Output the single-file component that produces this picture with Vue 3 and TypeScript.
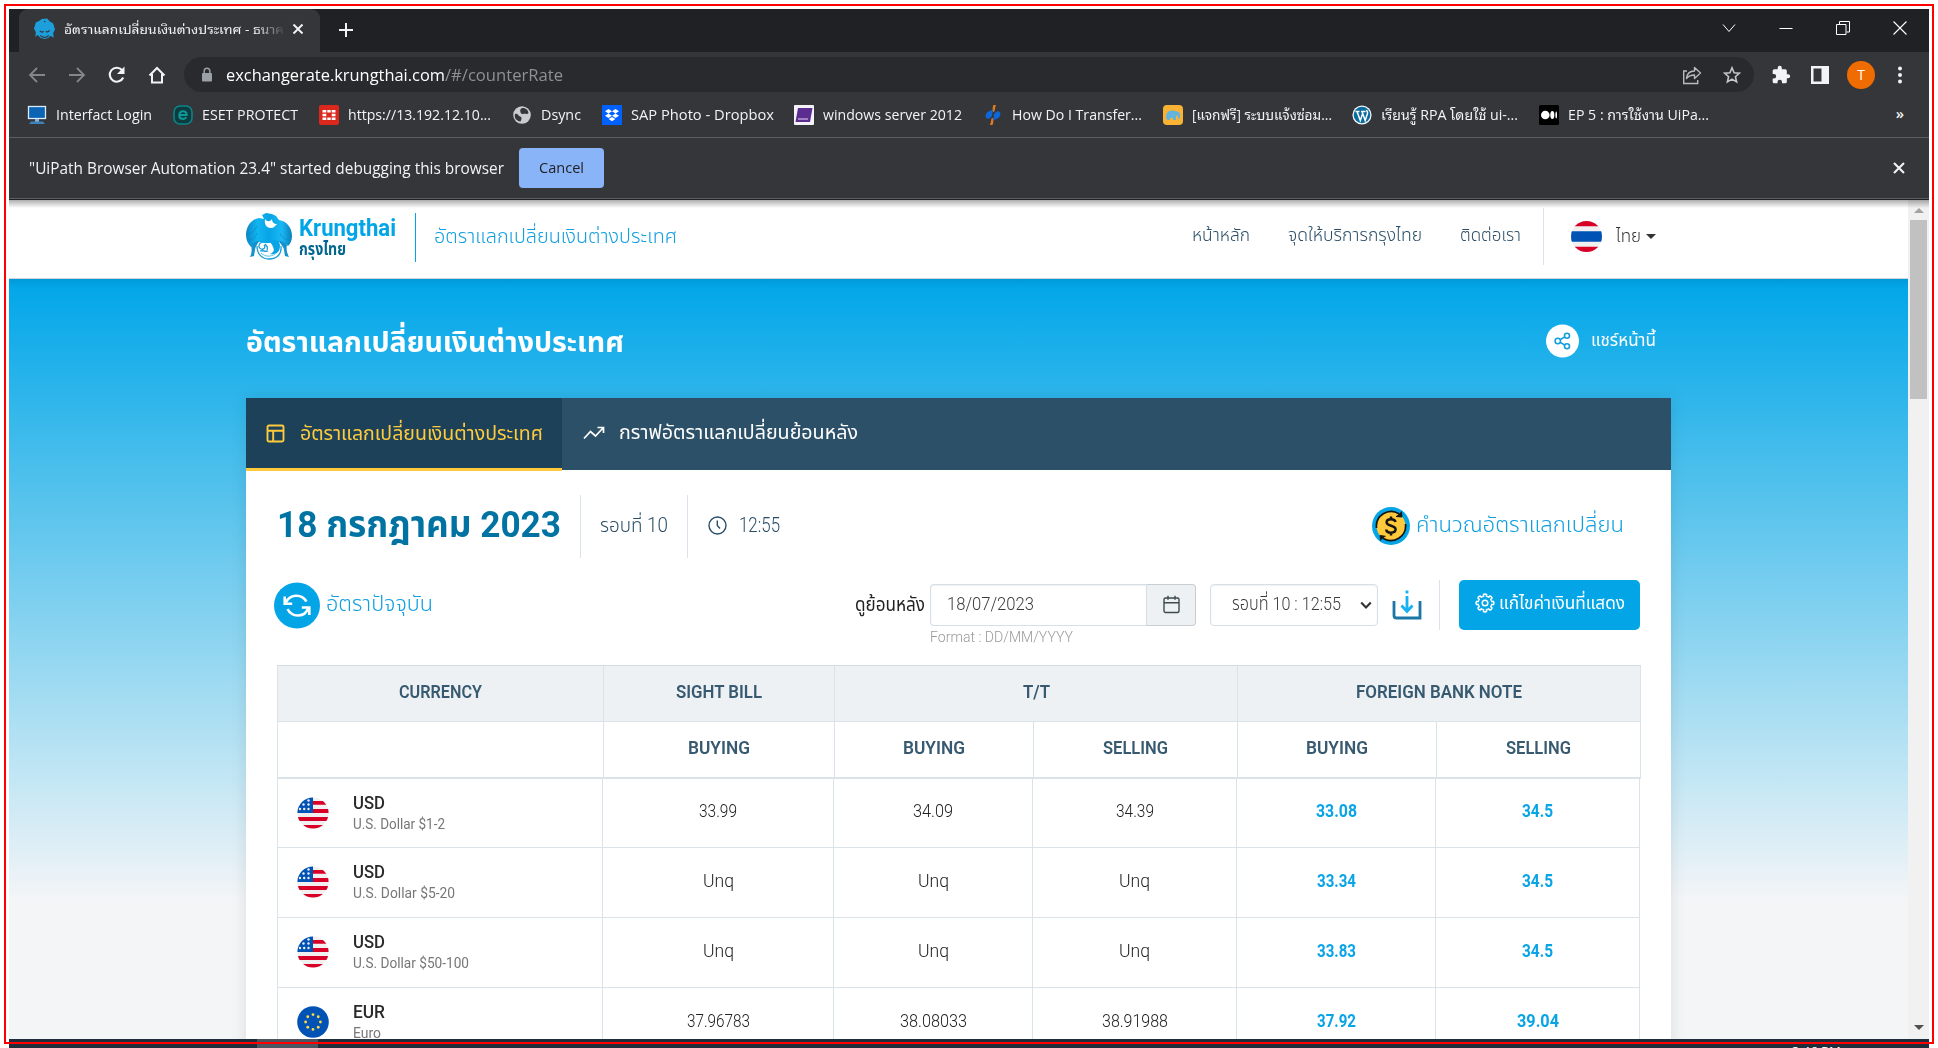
<script setup lang="ts">
interface Bookmark { icon: string; label: string; w: number; gap: number }
interface Cell { v: string; w: number }
interface Row { code: string; cw: number; name: string; nw: number; flag: 'us' | 'eu'; cells: Cell[] }

// Condenses (or widens) a label horizontally so that it takes exactly the given width.
const vFit = {
  mounted(el: HTMLElement, binding: { value: number }) {
    const natural = el.getBoundingClientRect().width
    if (!natural) return
    el.style.transform = `scaleX(${binding.value / natural})`
    el.style.marginRight = `${binding.value - natural}px`
  },
}

const bookmarks: Bookmark[] = [
  { icon: 'pc', label: 'Interfact Login', w: 96, gap: 21 },
  { icon: 'eset', label: 'ESET PROTECT', w: 96, gap: 21 },
  { icon: 'forti', label: 'https://13.192.12.10...', w: 143, gap: 21 },
  { icon: 'globe', label: 'Dsync', w: 40, gap: 21 },
  { icon: 'dropbox', label: 'SAP Photo - Dropbox', w: 143, gap: 20 },
  { icon: 'purple', label: 'windows server 2012', w: 139, gap: 21 },
  { icon: 'knot', label: 'How Do I Transfer...', w: 130, gap: 21 },
  { icon: 'elephant', label: '[แจกฟรี] ระบบแจ้งซ่อม...', w: 140, gap: 20 },
  { icon: 'wp', label: 'เรียนรู้ RPA โดยใช้ ui-...', w: 137, gap: 21 },
  { icon: 'medium', label: 'EP 5 : การใช้งาน UiPa...', w: 141, gap: 0 },
]

const unq: Cell = { v: 'Unq', w: 31 }
const rows: Row[] = [
  { code: 'USD', cw: 32, name: 'U.S. Dollar $1-2', nw: 92, flag: 'us', cells: [{ v: '33.99', w: 38 }, { v: '34.09', w: 40 }, { v: '34.39', w: 38 }, { v: '33.08', w: 41 }, { v: '34.5', w: 31 }] },
  { code: 'USD', cw: 32, name: 'U.S. Dollar $5-20', nw: 102, flag: 'us', cells: [unq, unq, unq, { v: '33.34', w: 39 }, { v: '34.5', w: 31 }] },
  { code: 'USD', cw: 32, name: 'U.S. Dollar $50-100', nw: 116, flag: 'us', cells: [unq, unq, unq, { v: '33.83', w: 39 }, { v: '34.5', w: 31 }] },
  { code: 'EUR', cw: 32, name: 'Euro', nw: 28, flag: 'eu', cells: [{ v: '37.96783', w: 63 }, { v: '38.08033', w: 67 }, { v: '38.91988', w: 66 }, { v: '37.92', w: 39 }, { v: '39.04', w: 42 }] },
]

const euStars = Array.from({ length: 8 }, (_, i) => {
  const a = (i * Math.PI) / 4
  return { x: 16 + 7.4 * Math.sin(a), y: 16 - 7.4 * Math.cos(a) }
})
const usStars = [[11.5, 3.5], [6.5, 7.5], [11.5, 7.5], [3, 12], [7.2, 12], [11.5, 12]]
const gearTeeth = [0, 45, 90, 135, 180, 225, 270, 315]
</script>

<template>
  <div class="shot">
    <div class="window">
      <div class="tabstrip">
        <div class="tab">
          <svg class="favicon" viewBox="0 0 46 46"><path d="M17 2 29 1l5 6 8 5 4 13-4 8 1 10-7-4-5 5-8 2-9-3-6-6-5 4 1-10-4-8 4-13 8-4z" fill="#1d9fdb" /><path d="M13 28c3 4 6 3 8 1m5 0c3 3 6 1 8-2M14 38c6 6 13 6 18 0M22 8h3" fill="none" stroke="#35363a" stroke-width="2.6" /></svg>
          <span class="tab-title"><span v-fit="220" class="t">อัตราแลกเปลี่ยนเงินต่างประเทศ - ธนาค</span></span>
          <svg class="tab-close" viewBox="0 0 12 12"><path d="M1.5 1.5 10.500 10.500M10.500 1.500 1.500 10.500" stroke="#f1f3f4" stroke-width="1.900" /></svg>
        </div>
        <svg class="plus" width="16" height="16" viewBox="0 0 16 16"><path d="M8 1v14M1 8h14" stroke="#f1f3f4" stroke-width="2" /></svg>
        <div class="winctl">
          <svg width="14" height="14" viewBox="0 0 14 14"><path d="M1 3.500 7 10.500 13 3.500" fill="none" stroke="#fff" stroke-width="1" /></svg>
          <svg width="14" height="14" viewBox="0 0 14 14"><path d="M.5 7.500h13" stroke="#fff" /></svg>
          <svg width="14" height="14" viewBox="0 0 14 14"><path d="M.5 3.500h9.500v10H.5zM3.500 3V.5h10v10.500H10.500" fill="none" stroke="#fff" /></svg>
          <svg width="14" height="14" viewBox="0 0 14 14"><path d="M.5.5l13 13M13.500.5l-13 13" stroke="#fff" stroke-width="1.100" /></svg>
        </div>
      </div>

      <div class="toolbar">
        <div class="navicons">
          <svg viewBox="0 0 20 20"><path d="M18 10H3M10 3 3 10l7 7" fill="none" stroke="#84868a" stroke-width="1.800" /></svg>
          <svg viewBox="0 0 20 20"><path d="M2 10h15M10 3l7 7-7 7" fill="none" stroke="#84868a" stroke-width="1.800" /></svg>
          <svg viewBox="0 0 20 20"><path d="M16.200 12.500A7 7 0 1 1 15 5" fill="none" stroke="#f1f3f4" stroke-width="2.100" /><path d="M17.500 1.500V9H10z" fill="#f1f3f4" /></svg>
          <svg viewBox="0 0 20 20"><path d="M2.500 10.500 10 3l7.500 7.500M5 9v8.500h10V9" fill="none" stroke="#f1f3f4" stroke-width="2" /></svg>
        </div>
        <div class="omnibox">
          <svg class="lock" width="12" height="16" viewBox="0 0 12 16"><rect x="1" y="6" width="10" height="8.500" rx="1" fill="#9aa0a6" /><path d="M3.200 6V4a2.800 2.800 0 0 1 5.600 0v2" fill="none" stroke="#9aa0a6" stroke-width="1.500" /></svg>
          <span v-fit="219" class="t url">exchangerate.krungthai.com</span><span v-fit="118" class="t url dim">/#/counterRate</span>
          <div class="omni-right">
            <svg width="20" height="20" viewBox="0 0 20 20"><path d="M5 6H1.700v12.500h14V15" fill="none" stroke="#b8babd" stroke-width="1.400" /><path d="M4.500 13.500c.5-5 3.500-7.500 8-7.500V2.500L18.500 8l-6 5.500V10c-3.500 0-6 1-8 3.500z" fill="none" stroke="#b8babd" stroke-width="1.400" stroke-linejoin="round" /></svg>
            <svg width="18" height="18" viewBox="0 0 18 18"><path d="m9 1.800 2.100 4.900 5.300.5-4 3.500 1.200 5.200L9 13.100l-4.600 2.800 1.200-5.200-4-3.500 5.300-.5z" fill="none" stroke="#c4c6c8" stroke-width="1.600" /></svg>
          </div>
        </div>
        <div class="ext">
          <svg width="20" height="20" viewBox="0 0 24 24"><path d="M20.500 11H19V7a2 2 0 0 0-2-2h-4V3.500a2.500 2.500 0 0 0-5 0V5H4a2 2 0 0 0-2 2v3.800h1.500a2.700 2.700 0 0 1 0 5.400H2V20a2 2 0 0 0 2 2h3.800v-1.500a2.700 2.700 0 0 1 5.400 0V22H17a2 2 0 0 0 2-2v-4h1.500a2.500 2.500 0 0 0 0-5z" fill="#f1f3f4" /></svg>
          <svg width="18" height="18" viewBox="0 0 18 18"><path d="M0 0h18v18H0zM2.500 2.500v13h8v-13z" fill="#f1f3f4" fill-rule="evenodd" /></svg>
          <span class="avatar">T</span>
          <svg width="4" height="18" viewBox="0 0 4 18"><circle cx="2" cy="2.500" r="2" fill="#f1f3f4" /><circle cx="2" cy="9" r="2" fill="#f1f3f4" /><circle cx="2" cy="15.500" r="2" fill="#f1f3f4" /></svg>
        </div>
      </div>

      <div class="bookmarks">
        <div v-for="b in bookmarks" :key="b.label" class="bm" :style="{ marginRight: b.gap + 'px' }">
          <svg width="20" height="20" viewBox="0 0 20 20">
            <template v-if="b.icon === 'pc'"><rect x="1.500" y="1.500" width="17" height="12" fill="#0b64b4" stroke="#d8ecfa" stroke-width="1.300" /><path d="M8 14h4v3H8z" fill="#8bb3cf" /><path d="M4 16.500h12l2 2.500H2z" fill="#3d83bb" /></template>
            <template v-else-if="b.icon === 'eset'"><rect x="1" y="1" width="18" height="18" rx="6" fill="#0d3b40" stroke="#0b8587" stroke-width="1.600" /><path d="M6.300 10h7.400c0-5-7-5-7.400 0s5.800 4.500 7 2.300" fill="none" stroke="#0b9a98" stroke-width="2" /></template>
            <template v-else-if="b.icon === 'forti'"><rect width="20" height="20" rx="2" fill="#da291c" /><path d="M3.500 5h3.800v2.500H3.500zM8.300 5h3.400v2.500H8.300zM12.700 5h3.800v2.500h-3.800zM3.500 8.800h3.800v2.500H3.500zM12.700 8.800h3.800v2.500h-3.800zM3.500 12.600h3.800V15H3.500zM8.300 12.600h3.400V15H8.300zM12.700 12.600h3.800V15h-3.800z" fill="#fff" /></template>
            <template v-else-if="b.icon === 'globe'"><circle cx="10" cy="10" r="8.800" fill="#c9cccf" /><path d="M3 9c3-1 3 2 5 2.500s2 2 .5 5C4 16 2 12.500 3 9zM9 3.500c2-1.500 7 0 7.500 4.500-1.500 2-4 0-5.500 1S7 6 9 3.500z" fill="#35363a" /></template>
            <template v-else-if="b.icon === 'dropbox'"><rect width="20" height="20" fill="#0061fe" /><path d="m6.500 4 3.500 2.200-3.500 2.200L3 6.200zM13.500 4 17 6.200l-3.500 2.200L10 6.200zM6.500 8.500l3.500 2.200-3.500 2.200L3 10.700zM13.500 8.500l3.500 2.200-3.500 2.200-3.500-2.200zM10 12l3.400 2.100L10 16.300l-3.400-2.200z" fill="#fff" /></template>
            <template v-else-if="b.icon === 'purple'"><rect width="20" height="20" rx="1" fill="#f4f2f6" /><path d="M4 3h14.500L16 17H1.500z" fill="#5c2d91" /><path d="M4 14h10" stroke="#b9a0d4" stroke-width="1.500" /></template>
            <template v-else-if="b.icon === 'knot'"><path d="M12.500 0c-3 1.500-.5 4-2.500 6.500M7.500 20c3-1.500.5-4 2.500-6.500" fill="none" stroke="#e07b1f" stroke-width="2.400" /><path d="M10.500 4.500C4.500 6 1.500 9 3 12.500c1.500 2.500 5 1 6-2 .5-2 0-4 1.500-6zM9.500 15.500c6-1.500 9-4.500 7.500-8-1.500-2.500-5-1-6 2-.5 2 0 4-1.500 6z" fill="#0d67d8" /></template>
            <template v-else-if="b.icon === 'elephant'"><rect width="20" height="20" rx="4" fill="#f9b233" /><path d="M3 13c0-5 2-7.500 6-7.500 3 0 4 1 5 1 3 0 3.500 3 3 7h-2v-3l-2 .5V15h-3v-2H7v2H4.500z" fill="#64b5dc" /></template>
            <template v-else-if="b.icon === 'wp'"><circle cx="10" cy="10" r="9.600" fill="#f5f8fa" /><circle cx="10" cy="10" r="8.300" fill="#0a6c9e" /><path d="M3.500 6.500h4M9 6.500h4.500M5 6.500l3.300 9L10.500 9M10 6.500l3.200 9 2.300-7c.4-1.500-.8-2.500-1-3.500" fill="none" stroke="#fff" stroke-width="1.500" /></template>
            <template v-else><rect width="20" height="20" rx="1.500" fill="#000" /><circle cx="6.300" cy="10" r="4.300" fill="#fff" /><ellipse cx="13.300" cy="10" rx="2" ry="4" fill="#fff" /><ellipse cx="17.200" cy="10" rx=".8" ry="3.600" fill="#fff" /></template>
          </svg>
          <span v-fit="b.w" class="t">{{ b.label }}</span>
        </div>
        <span class="more">»</span>
      </div>

      <div class="infobar">
        <span v-fit="475" class="t">"UiPath Browser Automation 23.4" started debugging this browser</span>
        <button class="cancel"><span v-fit="45" class="t">Cancel</span></button>
        <svg class="info-close" width="12" height="12" viewBox="0 0 12 12"><path d="M1 1 11 11M11 1 1 11" stroke="#f1f3f4" stroke-width="2.100" /></svg>
      </div>

      <div class="viewport">
        <div class="page">
          <header class="site-head">
            <svg class="bird" width="46" height="48" viewBox="0 0 46 48">
              <defs><linearGradient id="bird" x1="0" y1="0" x2="1" y2="0"><stop offset="0" stop-color="#0b86c4" /><stop offset=".25" stop-color="#12b5f2" /><stop offset=".5" stop-color="#08a4e6" /><stop offset=".78" stop-color="#19b8f4" /><stop offset="1" stop-color="#0a7fbb" /></linearGradient></defs>
              <path d="M16 2l4-2 6 1 4 2 3 4c8 1 13 8 13 16 0 4-1.500 8-4 10-2-2-6-4-10-4l-4 1H17l-4-1c-3 1-6 3-8 5-3-3-5-7-5-12C0 13 6 6 13 5l5 1z" fill="url(#bird)" />
              <path d="M19 6c-1 6 2 9 6 9 3 0 4-2 6-4-3 0-5-2-5-5-2 3-5 3-7 0z" fill="#fff" />
              <path d="M5 32c2-2 5-4 8-4-2 4-4 6-4 9l-1 6-4 1c2-4 2-8 1-12zM41 32c-2-2-5-4-8-4 2 4 5 6 5 9l1 6 4 1c-2-4-3-8-2-12z" fill="#1592cc" />
              <path d="M24 27c5 0 10-1 10 6 0 6-4 9-10 8 5-2 4-5 3-7-1-3-3-4-3-7z" fill="#08a4e6" />
              <path d="M11 33c0 7 4 13 12 13s13-5 12-13M16 29c-4 2-4 6-1 7s5-2 3-4M19 31c2 2 3 3 2 6M14 38c3-1 5 1 8 0" fill="none" stroke="#1a9ed6" stroke-width="1.300" />
              <path d="M15 40c4 4 10 4 14 1" fill="none" stroke="#5cc3ea" stroke-width="1" />
              <path d="M2 27c4 0 8-3 9-7M44 27c-5 0-9-3-10-7M1 21c5 0 8-4 10-8" fill="none" stroke="#0785c2" stroke-width=".8" opacity=".7" />
            </svg>
            <div class="brand">
              <span class="brand-en"><span v-fit="97" class="t">Krungthai</span></span>
              <span class="brand-th"><span v-fit="47" class="t">กรุงไทย</span></span>
            </div>
            <span class="brand-line"></span>
            <span v-fit="243" class="t head-title">อัตราแลกเปลี่ยนเงินต่างประเทศ</span>
            <nav class="menu">
              <span v-fit="58" class="t">หน้าหลัก</span>
              <span class="m2"><span v-fit="134" class="t">จุดให้บริการกรุงไทย</span></span>
              <span v-fit="61" class="t">ติดต่อเรา</span>
            </nav>
            <span class="lang-line"></span>
            <svg width="31" height="31" viewBox="0 0 32 32"><clipPath id="thc"><circle cx="16" cy="16" r="16" /></clipPath><g clip-path="url(#thc)"><rect width="32" height="32" fill="#f0f0f0" /><path d="M0 0h32v5.500H0zM0 26.500h32V32H0z" fill="#d80027" /><path d="M0 10.500h32v11H0z" fill="#0052b4" /></g></svg>
            <span class="lang"><span v-fit="25" class="t">ไทย</span></span>
            <span class="caret"></span>
          </header>

          <main class="hero">
            <div class="hero-row">
              <span v-fit="378" class="t hero-title">อัตราแลกเปลี่ยนเงินต่างประเทศ</span>
              <div class="share">
                <svg width="33" height="34" viewBox="0 0 33 34"><circle cx="16.500" cy="17" r="16.500" fill="#fff" /><g fill="none" stroke="#129fdc" stroke-width="1.600"><circle cx="11.800" cy="17" r="2.700" /><circle cx="21" cy="11.700" r="2.500" /><circle cx="21" cy="22.300" r="2.500" /><path d="m14.200 15.600 4.500-2.600M14.200 18.400l4.500 2.600" /></g></svg>
                <span v-fit="65" class="t">แชร์หน้านี้</span>
              </div>
            </div>

            <div class="card">
              <div class="tabs">
                <div class="ctab active">
                  <svg width="19" height="19" viewBox="0 0 19 19" fill="none" stroke="#ffcb3d" stroke-width="1.900"><rect x="1.500" y="1.500" width="16" height="16" rx="1.500" /><path d="M1.500 6.800h16M7.200 7v10.500" /></svg>
                  <span v-fit="243" class="t">อัตราแลกเปลี่ยนเงินต่างประเทศ</span>
                </div>
                <div class="ctab second">
                  <svg width="22" height="14" viewBox="0 0 22 14" fill="none" stroke="#fff" stroke-width="1.700"><path d="m1 12.500 6.500-7 5 4.500L20 2M14.500 1.500h6V7" /></svg>
                  <span v-fit="239" class="t">กราฟอัตราแลกเปลี่ยนย้อนหลัง</span>
                </div>
              </div>

              <div class="date-row">
                <span v-fit="284" class="t date">18 กรกฎาคม 2023</span>
                <div class="round"><span v-fit="68" class="t">รอบที่ 10</span></div>
                <div class="time">
                  <svg width="19" height="19" viewBox="0 0 19 19" fill="none" stroke="#2b4e66" stroke-width="1.400"><circle cx="9.500" cy="9.500" r="8.500" /><path d="M9.300 4.500v5l2.700 3" /></svg>
                  <span v-fit="41" class="t">12:55</span>
                </div>
                <div class="calc">
                  <svg width="38" height="38" viewBox="0 0 38 38"><circle cx="19" cy="19" r="19" fill="#04a5e7" /><circle cx="19" cy="19" r="14.500" fill="#ffc93c" /><path d="M4.500 21A14.800 14.800 0 0 1 27 6.700M33.500 17A14.800 14.800 0 0 1 11 31.300" fill="none" stroke="#151515" stroke-width="1.700" /><path d="m29.500 4.500.5 5.500-6-.5M8.500 33.500 8 28.500l5.500.8" fill="#151515" stroke="#151515" /><path d="M23.500 15c-.3-2-2-2.800-4.500-2.800s-4.400 1-4.400 3.100c0 4.300 9 2.500 9 7 0 2.300-2 3.400-4.600 3.400s-4.600-1-4.900-3.200M19 9.500v3M19 25.500v3" fill="none" stroke="#151515" stroke-width="2.500" /></svg>
                  <span v-fit="208" class="t">คำนวณอัตราแลกเปลี่ยน</span>
                </div>
              </div>

              <div class="filter">
                <svg class="refresh" width="46" height="47" viewBox="0 0 46 47"><circle cx="23" cy="23.500" r="23" fill="#04a5e7" /><g fill="none" stroke="#fff" stroke-width="2.600"><path d="M12 20.500C15.500 12.500 27 11 32.500 19.500M34 26.500c-3 8.500-15.500 10-20.500.5" /><path d="M10.700 14.500V21.800h7.500M35.300 33V25.500h-7.500" /></g></svg>
                <span v-fit="107" class="t current">อัตราปัจจุบัน</span>
                <div class="controls">
                  <span v-fit="70" class="t lookback">ดูย้อนหลัง</span>
                  <div class="date-group">
                    <div class="date-input">
                      <div class="field"><span v-fit="87" class="t">18/07/2023</span></div>
                      <div class="addon"><svg width="17" height="19" viewBox="0 0 17 19" fill="none" stroke="#3e4b4f" stroke-width="1.400"><rect x="1" y="3" width="15" height="14.500" rx="1.500" /><path d="M1 7.800h15M5 .8v4M12 .8v4" /></svg></div>
                    </div>
                    <span v-fit="143" class="t format">Format : DD/MM/YYYY</span>
                  </div>
                  <div class="select"><span v-fit="109" class="t">รอบที่ 10 : 12:55</span><svg width="12" height="9" viewBox="0 0 12 9"><path d="M1.200 1.500 6 6.500l4.800-5" fill="none" stroke="#333" stroke-width="2.100" /></svg></div>
                  <svg class="dl" width="30" height="32" viewBox="0 0 30 32"><path d="M2 12v14.500Q2 29 4.500 29H28V12" fill="none" stroke="#1a76a5" stroke-width="2.800" /><path d="M15 7v15.500M9.500 16.500l5.500 6 5.500-6" fill="none" stroke="#16b1f2" stroke-width="2.800" /><path d="M13.600 1.500h2.800v3h-2.800z" fill="#16b1f2" /></svg>
                  <span class="split"></span>
                  <div class="edit-btn">
                    <svg width="20" height="20" viewBox="0 0 20 20" fill="none" stroke="#fff" stroke-width="1.500"><g><path v-for="a in gearTeeth" :key="a" :transform="`rotate(${a} 10 10)`" d="M7.300 3.500 8.500 3.300V1.500Q10 .7 11.500 1.500V3.300L12.700 3.700" /></g><circle cx="10" cy="10" r="2.800" /></svg>
                    <span v-fit="126" class="t">แก้ไขค่าเงินที่แสดง</span>
                  </div>
                </div>
              </div>

              <div class="table">
                <div class="thead shade">
                  <div><span v-fit="83" class="t">CURRENCY</span></div>
                  <div><span v-fit="86" class="t">SIGHT BILL</span></div>
                  <div class="span2"><span v-fit="27" class="t">T/T</span></div>
                  <div class="span2"><span v-fit="166" class="t">FOREIGN BANK NOTE</span></div>
                </div>
                <div class="thead sub">
                  <div></div>
                  <div><span v-fit="62" class="t">BUYING</span></div>
                  <div><span v-fit="62" class="t">BUYING</span></div>
                  <div><span v-fit="65" class="t">SELLING</span></div>
                  <div><span v-fit="62" class="t">BUYING</span></div>
                  <div><span v-fit="65" class="t">SELLING</span></div>
                </div>
                <div v-for="(r, i) in rows" :key="i" class="trow">
                  <div class="cur">
                    <svg width="32" height="32" viewBox="0 0 32 32">
                      <clipPath :id="'fc' + i"><circle cx="16" cy="16" r="15.600" /></clipPath>
                      <g v-if="r.flag === 'us'" :clip-path="`url(#fc${i})`"><rect width="32" height="32" fill="#f0f0f0" /><path d="M16 4h16v3.700H16zM16 12h16v4H16zM0 20h32v4H0zM0 28h32v4H0z" fill="#d80027" /><rect width="16" height="16" fill="#0052b4" /><circle v-for="(s, k) in usStars" :key="k" :cx="s[0]" :cy="s[1]" r="1.200" fill="#f0f0f0" /></g>
                      <g v-else><circle cx="16" cy="16" r="15.800" fill="#0052b4" /><circle v-for="(s, k) in euStars" :key="k" :cx="s.x" :cy="s.y" r="1.400" fill="#ffda44" /></g>
                    </svg>
                    <div class="names">
                      <span class="code"><span v-fit="r.cw" class="t">{{ r.code }}</span></span>
                      <span class="name"><span v-fit="r.nw" class="t">{{ r.name }}</span></span>
                    </div>
                  </div>
                  <div v-for="(c, k) in r.cells" :key="k" class="val" :class="{ note: k > 2 }"><span v-fit="c.w" class="t">{{ c.v }}</span></div>
                </div>
              </div>
            </div>
          </main>
        </div>
        <div class="scrollbar">
          <span class="up"></span>
          <span class="thumb"></span>
          <span class="down"></span>
        </div>
      </div>
      <div class="taskbar"><span class="task"></span><span class="clock">3:46 PM</span></div>
    </div>
    <div class="frame"></div>
  </div>
</template>

<style>
body { margin: 0; background: #fff; }
</style>

<style scoped>
.shot { position: relative; width: 1938px; height: 1048px; overflow: hidden; box-sizing: border-box; padding: 9px 9px 0; background: #fff; font-family: "Open Sans", "Noto Sans Thai Looped", "Noto Sans Thai", sans-serif; }
.shot * { box-sizing: border-box; }
.shot svg { display: block; flex: none; }
.frame { position: absolute; left: 4px; top: 4px; width: 1930px; height: 1040px; border: 2px solid #f00; pointer-events: none; z-index: 5; }
.t { display: inline-block; white-space: nowrap; transform-origin: 0 50%; flex: none; }
.window { display: flex; flex-direction: column; width: 1920px; height: 1039px; }

.tabstrip { height: 43px; background: #202124; display: flex; align-items: center; flex: none; padding-left: 10px; }
.tab { align-self: stretch; width: 301px; background: #35363a; border-radius: 9px 9px 0 0; display: flex; align-items: center; padding-left: 15px; padding-bottom: 4px; font-size: 13px; line-height: 20px; color: #f1f3f4; }
.favicon { width: 21px; height: 21px; }
.tab-title { margin-left: 9px; width: 222px; overflow: hidden; display: flex; -webkit-mask-image: linear-gradient(90deg, #000 86%, transparent 100%); mask-image: linear-gradient(90deg, #000 86%, transparent 100%); }
.tab-close { width: 12px; height: 12px; margin-left: 6px; }
.plus { margin: 0 0 0 18px; position: relative; top: -1px; }
.winctl { margin-left: auto; display: flex; gap: 43px; padding-right: 22px; position: relative; top: -3px; }

.toolbar { height: 45px; background: #35363a; display: flex; flex: none; align-items: center; }
.navicons { display: flex; gap: 20px; padding-left: 18px; width: 175px; flex: none; }
.navicons svg { width: 20px; height: 20px; }
.omnibox { width: 1570px; flex: none; height: 35px; border-radius: 18px; background: #292a2d; display: flex; align-items: center; padding-left: 17px; }
.lock { margin-right: 13px; }
.url { font-size: 16px; line-height: 24px; color: #fff; }
.dim { color: #8d9095; }
.omni-right { margin-left: auto; display: flex; gap: 21px; align-items: center; padding-right: 13px; }
.ext { display: flex; align-items: center; padding-left: 17px; gap: 20px; }
.avatar { width: 28px; height: 28px; flex: none; border-radius: 50%; background: #ef6c00; color: #fff; font-size: 14px; line-height: 28px; text-align: center; margin: 0 3px 0 -2px; }

.bookmarks { height: 40px; background: #35363a; display: flex; flex: none; align-items: center; padding: 0 25px 4px 18px; font-size: 14px; line-height: 22px; color: #f1f3f4; }
.bm { display: flex; align-items: center; gap: 9px; }
.more { margin-left: auto; font-weight: 600; font-size: 15px; line-height: 18px; position: relative; top: -2px; }
.infobar { height: 62px; background: #35363a; border-top: 1px solid #5d5e62; border-bottom: 1px solid #5d5e62; display: flex; flex: none; align-items: center; padding: 0 24px 0 20px; font-size: 15.5px; line-height: 22px; color: #f1f3f4; }
.cancel { margin: 0 0 0 15px; width: 85px; height: 40px; background: #8ab4f8; border: 0; border-radius: 4px; font: 14px/20px "Open Sans", sans-serif; color: #202124; display: flex; align-items: center; justify-content: center; padding: 0; }
.info-close { margin-left: auto; }

.viewport { flex: 1; min-height: 0; display: flex; overflow: hidden; position: relative; border-top: 1px solid #202124; }
.viewport::after { content: ""; position: absolute; left: 0; right: 0; top: 0; height: 8px; background: linear-gradient(rgba(0,0,0,.32), rgba(0,0,0,0)); }
.page { width: 1899px; overflow: hidden; font-family: Roboto, "Noto Sans Thai", "Noto Sans", sans-serif; }
.site-head { height: 79px; background: #fff; display: flex; align-items: center; padding-left: 237px; padding-bottom: 5px; border-bottom: 1px solid #cfd6da; }
.brand { width: 107px; margin-left: 7px; display: flex; flex-direction: column; padding-top: 2px; }
.brand-en { font-size: 24px; font-weight: 700; line-height: 24px; color: #02a6e8; height: 22px; }
.brand-th { font-size: 17px; font-weight: 700; line-height: 22px; color: #00658f; height: 22px; }
.brand-line { width: 1px; height: 49px; background: #02a6e8; margin: 2px 18px 0 9px; }
.head-title { font-size: 20px; line-height: 30px; color: #129fe0; font-weight: 300; margin-top: -2px; }
.menu { margin-left: 515px; display: flex; gap: 38px; font-size: 17px; line-height: 26px; color: #2b4e66; font-weight: 300; margin-top: -3px; }
.m2 { display: flex; }
.lang-line { width: 1px; height: 57px; background: #dbe3ea; margin: 0 27px 0 22px; }
.lang { margin-left: 14px; font-size: 18px; line-height: 26px; color: #333; font-weight: 300; display: flex; margin-top: -2px; }
.caret { border: 5px solid transparent; border-top-color: #333; border-bottom: 0; margin-left: 5px; }

.hero { height: 762px; padding: 0 237px; background: linear-gradient(rgba(0,0,0,.08), rgba(0,0,0,0) 9px), linear-gradient(#00a6e9 0, #4bbfec 192px, #bfe5f4 490px, #f4f5f7 622px); }
.hero-row { height: 119px; display: flex; align-items: center; color: #fff; padding-top: 5px; }
.hero-title { font-size: 29px; line-height: 40px; font-weight: 700; margin-top: 2px; }
.share { margin-left: auto; margin-right: 15px; display: flex; align-items: center; gap: 12px; font-size: 17px; line-height: 26px; }
.share .t { margin-top: -2px; }
.card { width: 1425px; height: 660px; background: #fff; box-shadow: 0 0 15px rgba(0,0,0,.1); }
.tabs { height: 72px; background: #2c5067; display: flex; }
.ctab { display: flex; align-items: center; font-size: 20px; line-height: 30px; padding-bottom: 4px; color: #fff; }
.ctab .t { margin-top: -1px; }
.active { width: 316px; height: 73px; background: #1c4159; color: #ffcb3d; border-bottom: 3px solid #ffcb3d; padding: 0 0 0 20px; gap: 15px; }
.second { padding-left: 21px; gap: 14px; }
.second svg { margin-top: 2px; }
.date-row { margin-top: 25px; height: 63px; padding-left: 31px; display: flex; align-items: center; color: #2b4e66; font-size: 20px; line-height: 30px; font-weight: 300; }
.date-row .t { margin-top: -4px; }
.date { font-size: 37px; line-height: 50px; font-weight: 700; color: #0073a2; }
.round { height: 63px; margin-left: 19px; border-left: 1px solid #dbe3ea; border-right: 1px solid #dbe3ea; width: 108px; padding-left: 19px; display: flex; align-items: center; }
.time { display: flex; align-items: center; gap: 12px; padding-left: 20px; }
.time svg, .calc svg { margin-top: -2px; }
.calc { margin-left: auto; margin-right: 47px; display: flex; align-items: center; gap: 6px; color: #129fe0; font-size: 22px; }
.filter { margin-top: 21px; height: 51px; padding-left: 28px; display: flex; align-items: center; font-weight: 300; font-size: 19px; line-height: 28px; color: #3c3c3c; }
.refresh { margin-top: 2px; }
.current { margin-left: 6px; margin-top: -2px; font-size: 22px; color: #129fe0; }
.controls { margin-left: auto; margin-right: 31px; display: flex; align-items: center; }
.lookback { font-weight: 400; color: #222; }
.date-group { margin-left: 5px; width: 266px; height: 42px; flex: none; }
.date-input { display: flex; height: 42px; }
.field { width: 216px; border: 1px solid #d5dfe7; border-right: 0; border-radius: 4px 0 0 4px; padding-left: 16px; display: flex; align-items: center; padding-bottom: 2px; box-shadow: inset 0 1px 2px rgba(0,0,0,.06); }
.addon { width: 50px; background: #edf1f4; border: 1px solid #c9cdd0; border-left-color: #d5dfe7; border-radius: 0 4px 4px 0; display: flex; align-items: center; justify-content: center; padding-bottom: 1px; }
.format { display: block; width: fit-content; font-size: 14px; line-height: 22px; color: #999; }
.select { margin-left: 14px; width: 168px; height: 42px; border: 1px solid #d5dfe7; border-radius: 4px; padding: 0 5px 2px 21px; display: flex; align-items: center; justify-content: space-between; box-shadow: inset 0 1px 2px rgba(0,0,0,.06); }
.select svg { margin-top: 4px; }
.dl { margin-left: 14px; }
.split { height: 50px; width: 1px; background: #dbe3ea; margin: 0 19px 0 17px; }
.edit-btn { width: 181px; height: 50px; background: #04a5e7; border-radius: 5px; display: flex; align-items: center; padding: 0 0 3px 16px; gap: 4px; color: #fff; font-size: 18px; font-weight: 400; }

.table { margin: 35px 0 0 31px; width: 1364px; border-left: 1px solid #dbe3ea; border-top: 1px solid #d5dade; }
.thead, .trow { display: grid; grid-template-columns: 326px 231px 199px 204px 199px 204px; }
.trow { grid-template-columns: 325px 231px 199px 204px 199px 204px; }
.thead > div { height: 56px; border-right: 1px solid #dbe3ea; border-bottom: 1px solid #dbe3ea; display: flex; align-items: center; justify-content: center; font-size: 19px; line-height: 28px; font-weight: 600; color: #385a70; padding-bottom: 4px; }
.sub > div { height: 57px; border-bottom: 2px solid #dbe3ea; }
.shade { background: #edf1f4; }
.span2 { grid-column: span 2; }
.trow > div { height: 70px; border-right: 1px solid #dbe3ea; border-bottom: 1px solid #dbe3ea; }
.trow:nth-child(3) > div { height: 69px; }
.cur { display: flex; align-items: center; padding-left: 19px; padding-top: 1px; }
.cur svg { margin-top: -2px; }
.names { margin-left: 24px; display: flex; flex-direction: column; }
.code { font-size: 19px; font-weight: 500; line-height: 26px; height: 24px; color: #2a2a2a; margin-top: -4px; }
.name { font-size: 14px; line-height: 20px; height: 20px; color: #777; }
.val { display: flex; align-items: center; justify-content: center; font-size: 18.5px; line-height: 26px; font-weight: 300; color: #222; padding-bottom: 4px; }
.note { font-weight: 700; color: #09a4e6; }

.scrollbar { width: 21px; background: #f1f1f1; display: flex; flex-direction: column; align-items: center; }
.up { border: 5px solid transparent; border-bottom: 5px solid #a3a3a3; border-top: 0; margin-top: 8px; }
.thumb { width: 17px; height: 179px; background: #c1c1c1; margin-top: 7px; }
.down { border: 5px solid transparent; border-top: 5px solid #505050; border-bottom: 0; margin-top: auto; margin-bottom: 9px; }
.taskbar { height: 9px; background: #1e2d39; flex: none; display: flex; overflow: hidden; }
.task { width: 61px; height: 9px; margin-left: 248px; background: #4b5661; }
.clock { margin: 4px 0 0 1474px; font-size: 13px; line-height: 16px; color: #fff; white-space: nowrap; }
</style>
